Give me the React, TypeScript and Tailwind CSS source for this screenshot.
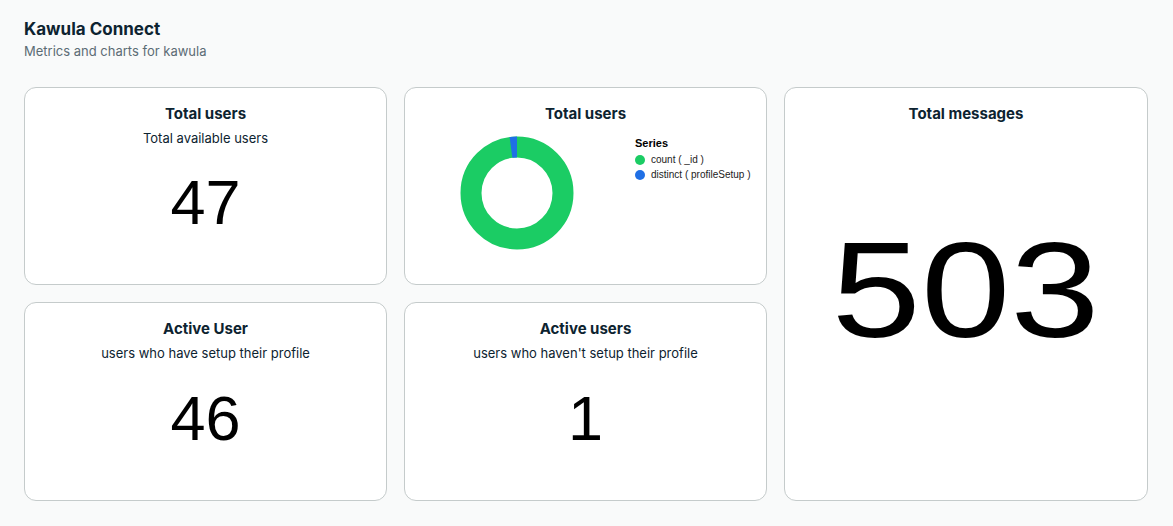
import React from 'react';

const sans = { fontFamily: 'Inter, "Noto Sans", sans-serif' };
const arial = { fontFamily: '"Liberation Sans", Arial, sans-serif' };

function Donut() {
  // green ring with a thin blue slice just left of 12 o'clock
  const cx = 60;
  const cy = 60;
  const r = 46;
  const pt = (deg: number) => {
    const a = ((deg - 90) * Math.PI) / 180;
    return [cx + r * Math.cos(a), cy + r * Math.sin(a)];
  };
  const [x1, y1] = pt(-7.5);
  const [x2, y2] = pt(0);
  return (
    <svg width="120" height="120" viewBox="0 0 120 120">
      <circle cx={cx} cy={cy} r={r} fill="none" stroke="#1bcc64" strokeWidth="21" />
      <path d={`M ${x1} ${y1} A ${r} ${r} 0 0 1 ${x2} ${y2}`} fill="none" stroke="#1f6fe5" strokeWidth="21" />
    </svg>
  );
}

function StatCard({ title, subtitle, value }: { title: string; subtitle: string; value: string }) {
  return (
    <div className="flex flex-col rounded-xl border border-[#c5cbcb] bg-white pt-[16px] text-center">
      <div className="text-[15px] font-bold leading-5 text-[#0d2330]">{title}</div>
      <div className="mt-[4px] text-[13px] leading-5 text-[#0d2330]">{subtitle}</div>
      <div className="flex flex-1 items-center justify-center pb-[27px]">
        <span className="text-[63px] leading-none text-black" style={arial}>
          {value}
        </span>
      </div>
    </div>
  );
}

export default function App() {
  return (
    <div className="min-h-screen bg-[#f9fafa] pl-6 pt-[17px]" style={sans}>
      <h1 className="text-[17px] font-bold leading-6 text-[#0d2330]">Kawula Connect</h1>
      <p className="text-[13px] leading-5 text-[#5c6c75]">Metrics and charts for kawula</p>

      <div className="mt-[26px] grid grid-cols-[363px_363px_364px] grid-rows-[198px_199px] gap-x-[17px] gap-y-[17px]">
        <StatCard title="Total users" subtitle="Total available users" value="47" />

        <div className="rounded-xl border border-[#c5cbcb] bg-white pt-[16px]">
          <div className="text-center text-[15px] font-bold leading-5 text-[#0d2330]">Total users</div>
          <div className="flex pl-[52px] pt-[9px]">
            <Donut />
            <div className="ml-[58px] pt-[1px]" style={arial}>
              <div className="text-[11px] font-bold leading-[18px] text-black">Series</div>
              <div className="flex items-center gap-[6px] text-[10px] leading-[15px] text-[#222]">
                <span className="h-[10px] w-[10px] rounded-full bg-[#1bcc64]" />
                count ( _id )
              </div>
              <div className="flex items-center gap-[6px] text-[10px] leading-[15px] text-[#222]">
                <span className="h-[10px] w-[10px] rounded-full bg-[#1f6fe5]" />
                distinct ( profileSetup )
              </div>
            </div>
          </div>
        </div>

        <div className="row-span-2 flex flex-col rounded-xl border border-[#c5cbcb] bg-white pt-[16px] text-center">
          <div className="text-[15px] font-bold leading-5 text-[#0d2330]">Total messages</div>
          <div className="flex flex-1 items-center justify-center pb-[44px]">
            <span className="inline-block scale-x-[1.19] text-[135px] leading-none text-black" style={arial}>
              503
            </span>
          </div>
        </div>

        <StatCard title="Active User" subtitle="users who have setup their profile" value="46" />
        <StatCard title="Active users" subtitle="users who haven't setup their profile" value="1" />
      </div>
    </div>
  );
}
